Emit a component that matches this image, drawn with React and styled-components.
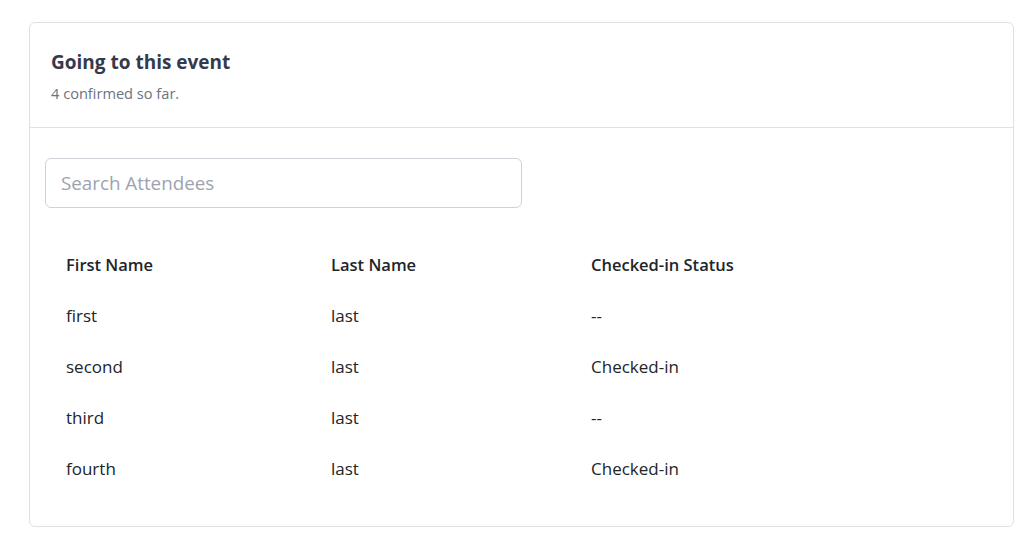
import styled, { createGlobalStyle } from "styled-components";

const GlobalStyle = createGlobalStyle`
  body {
    margin: 0;
    background: #fff;
    font-family: "Open Sans", "Noto Sans", sans-serif;
    color: #212529;
  }
`;

const Page = styled.div`
  padding: 22px 16px 0 29px;
`;

const Card = styled.div`
  border: 1px solid #dfe1e5;
  border-radius: 6px;
  background: #fff;
`;

const Header = styled.div`
  padding: 26px 21px 24px;
  border-bottom: 1px solid #dfe1e5;
`;

const Title = styled.h3`
  margin: 0;
  font-size: 19px;
  font-weight: 700;
  color: #343a4b;
  line-height: 26px;
`;

const Subtitle = styled.p`
  margin: 8px 0 0;
  font-size: 14.6px;
  color: #6b7280;
  line-height: 20px;
`;

const Body = styled.div`
  padding: 30px 15px 32px;
`;

const Search = styled.input`
  box-sizing: border-box;
  display: block;
  width: 477px;
  height: 50px;
  padding: 0 15px;
  border: 1px solid #cfd2d8;
  border-radius: 6px;
  font-family: inherit;
  font-size: 18.8px;
  color: #212529;
  outline: none;
  &::placeholder {
    color: #9ca3af;
  }
`;

const Table = styled.table`
  margin-top: 30px;
  width: 100%;
  border-collapse: collapse;
`;

const Th = styled.th`
  text-align: left;
  font-weight: 600;
  font-size: 16.5px;
  color: #212529;
  height: 52px;
  padding: 0 21px;
  width: ${(p) => p.$w || "auto"};
`;

const Td = styled.td`
  font-size: 17px;
  height: 51px;
  padding: 0 21px;
  color: #212529;
`;

const rows = [
  ["first", "last", "--"],
  ["second", "last", "Checked-in"],
  ["third", "last", "--"],
  ["fourth", "last", "Checked-in"],
];

export default function App() {
  return (
    <Page>
      <GlobalStyle />
      <Card>
        <Header>
          <Title>Going to this event</Title>
          <Subtitle>4 confirmed so far.</Subtitle>
        </Header>
        <Body>
          <Search placeholder="Search Attendees" />
          <Table>
            <thead>
              <tr>
                <Th $w="223px">First Name</Th>
                <Th $w="218px">Last Name</Th>
                <Th>Checked-in Status</Th>
              </tr>
            </thead>
            <tbody>
              {rows.map((r, i) => (
                <tr key={i}>
                  {r.map((c, j) => (
                    <Td key={j}>{c}</Td>
                  ))}
                </tr>
              ))}
            </tbody>
          </Table>
        </Body>
      </Card>
    </Page>
  );
}
